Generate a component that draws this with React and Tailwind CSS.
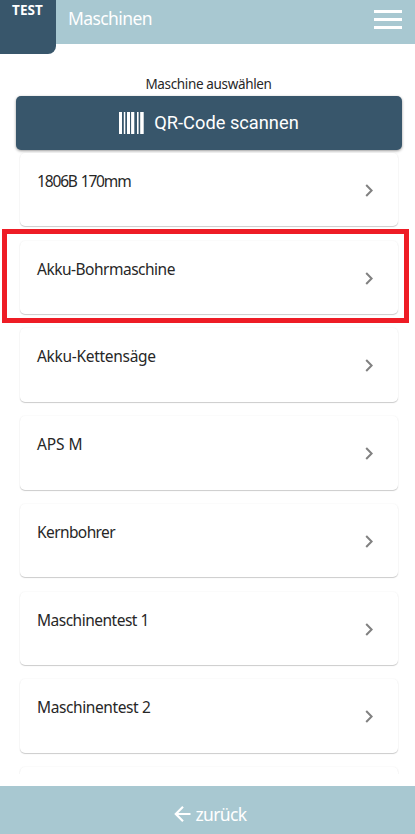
const machines = [
  { name: "1806B 170mm", text: "tracking-[-1.15px] [word-spacing:1px]" },
  { name: "Akku-Bohrmaschine", text: "tracking-[-0.5px]" },
  { name: "Akku-Kettensäge", text: "tracking-[-0.3px]" },
  { name: "APS M", text: "tracking-[-0.1px]" },
  { name: "Kernbohrer", text: "tracking-[-0.6px]" },
  { name: "Maschinentest 1", text: "tracking-[-0.5px]" },
  { name: "Maschinentest 2", text: "tracking-[-0.4px]" },
];

const cardStyle =
  "h-[73.5px] w-full shrink-0 rounded-[5px] bg-white shadow-[0_1px_1px_rgba(0,0,0,0.19),0_0_2px_rgba(0,0,0,0.07)]";

function Header() {
  return (
    <header className="flex h-11 shrink-0 items-start bg-[#a8c8d1] text-white">
      <div className="h-[54px] w-14 shrink-0 rounded-br-[8px] bg-[#38566b] text-center">
        <span className="mr-px block pt-px text-[13.5px] leading-[18px] font-bold tracking-[0.1px]">TEST</span>
      </div>
      <h1 className="ml-3 pt-[5px] text-[17.5px] leading-[26px] tracking-[-0.6px]">Maschinen</h1>
      <button aria-label="Menu" className="mt-[10px] mr-[13px] ml-auto flex w-7 flex-col gap-[5px]">
        <span className="h-[3px] w-full bg-white" />
        <span className="h-[3px] w-full bg-white" />
        <span className="h-[3px] w-full bg-white" />
      </button>
    </header>
  );
}

function Barcode() {
  return (
    <svg width="25" height="22" viewBox="0 0 25 22" fill="currentColor" aria-hidden="true">
      <path d="M0 0h3v22H0zM4.8 0h1.5v22H4.8zM8 0h3v22H8zM12.1 0h3.2v22h-3.2zM18 0h1.6v22H18zM21.2 0h3.5v22h-3.5z" />
    </svg>
  );
}

function Machine({ name, text }) {
  return (
    <li className={"flex justify-between " + cardStyle}>
      <span className={"pt-4 pl-[17px] text-[15.5px] leading-6 text-[#272727] " + text}>{name}</span>
      <svg className="mt-[31px] mr-6" width="9" height="13" viewBox="0 0 9 13" fill="none" stroke="#818181" strokeWidth="2" aria-hidden="true">
        <path d="M1.2 1l5.4 5.5L1.2 12" />
      </svg>
    </li>
  );
}

export default function App() {
  return (
    <div className="relative flex h-[834px] w-full flex-col overflow-hidden bg-white font-['Noto_Sans',sans-serif]">
      <Header />
      <main className="flex h-[730px] shrink-0 flex-col overflow-hidden pt-[29px]">
        <p className="h-[23px] shrink-0 pl-[2px] text-center text-[13.5px] leading-[22px] text-[#272727]">
          <span className="tracking-[-0.35px]">Maschine auswählen</span>
        </p>
        <button className="mr-[13px] ml-4 flex h-[53.5px] shrink-0 items-center justify-center gap-[10px] rounded-[5px] bg-[#38566b] font-['Roboto',sans-serif] text-[18.25px] text-white shadow-[0_1px_3px_rgba(0,0,0,0.4)]">
          <Barcode />
          QR-Code scannen
        </button>
        <ul className="mt-[3.4px] mr-[17px] ml-5 flex flex-col gap-[14.25px]">
          {machines.map((m) => (
            <Machine key={m.name} {...m} />
          ))}
          <li className={cardStyle} />
        </ul>
      </main>
      <footer className="mt-3 flex h-12 shrink-0 items-center justify-center bg-[#a8c8d1] pt-2 pl-[6px] text-white">
        <svg width="17" height="16" viewBox="0 0 17 16" fill="none" stroke="currentColor" strokeWidth="2.2" aria-hidden="true">
          <path d="M9 .8L1.8 8 9 15.2M1.8 8H16.5" />
        </svg>
        <span className="ml-1 text-[17.5px] leading-6 tracking-[-0.6px]">zurück</span>
      </footer>
      <div className="pointer-events-none absolute top-[229px] left-[2px] h-[94px] w-[407px] border-[5px] border-[#ee1c25]" />
    </div>
  );
}
